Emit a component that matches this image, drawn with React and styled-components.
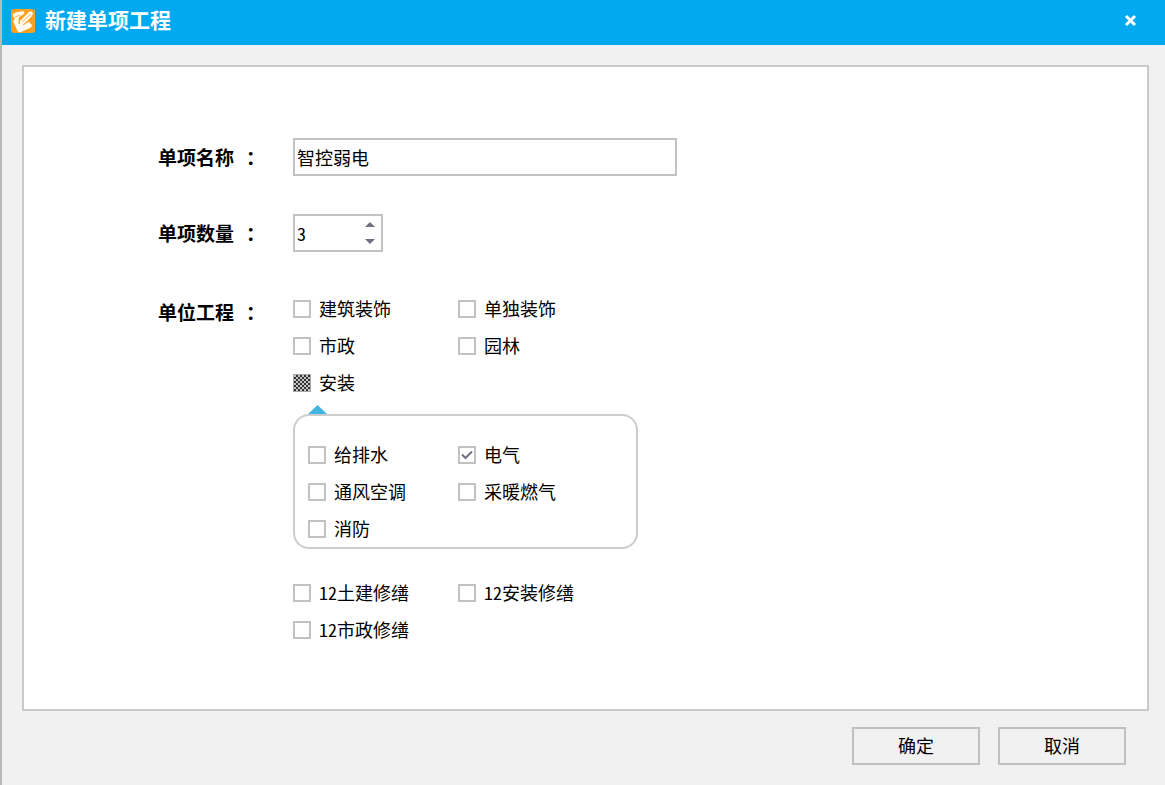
import React, { useEffect, useRef, useState } from 'react';
import styled, { createGlobalStyle } from 'styled-components';

const GlobalStyle = createGlobalStyle`
  * {
    box-sizing: border-box;
  }

  body {
    margin: 0;
    background: #f1f1f1;
  }

  body, input, button {
    font-family: "Noto Sans CJK SC", sans-serif;
    font-size: 18px;
    color: #000;
    font-feature-settings: "hwid";
  }
`;

const Window = styled.form`
  display: flex;
  flex-direction: column;
  min-height: 100vh;
  border-left: 2px solid #b9b9b9;
`;

const TitleBar = styled.header`
  display: flex;
  align-items: center;
  height: 45px;
  padding: 0 26px 4px 9px;
  background: #02a9f1;
  color: #fff;
`;

const Title = styled.h1`
  flex: 1;
  margin: 0 0 0 10px;
  padding-bottom: 4px;
  font-size: 21px;
  line-height: 28px;
  font-weight: 700;
`;

const CloseButton = styled.button`
  display: flex;
  padding: 2px;
  border: 0;
  background: none;
  color: #fff;
`;

const Panel = styled.main`
  flex: 1;
  display: flex;
  flex-direction: column;
  gap: 38px;
  margin: 20px 16px 0 20px;
  padding: 71px 20px 60px 134px;
  border: 2px solid #cacaca;
  background: #fff;
`;

const Row = styled.div`
  display: grid;
  grid-template-columns: 135px minmax(0, 384px);
  align-items: start;
`;

const Label = styled.label`
  font-size: 19px;
  line-height: ${({ $tall }) => ($tall ? '44px' : '38px')};
  font-weight: 700;

  &::after {
    content: '：';
    margin-left: 12px;
  }
`;

const TextInput = styled.input`
  width: 100%;
  height: 38px;
  padding: 0 2px;
  border: 2px solid #c2c2c2;
  border-radius: 0;
  background: #fff;
  outline: none;
`;

const Spinner = styled.div`
  display: flex;
  width: 90px;
  height: 38px;
  border: 2px solid #c2c2c2;
`;

const SpinnerInput = styled.input`
  flex: 1;
  min-width: 0;
  padding: 0 2px;
  border: 0;
  background: none;
  outline: none;
  appearance: textfield;

  &::-webkit-inner-spin-button {
    appearance: none;
  }
`;

const SpinnerButtons = styled.div`
  display: flex;
  flex-direction: column;
  width: 22px;
`;

const SpinnerButton = styled.button`
  flex: 1;
  display: flex;
  align-items: center;
  justify-content: center;
  padding: 0;
  border: 0;
  background: none;
`;

const Options = styled.div`
  display: grid;
  grid-template-columns: ${({ $first }) => $first || 165}px 1fr;
  grid-auto-rows: 37px;
`;

const OptionLabel = styled.label`
  display: flex;
  align-items: center;
  gap: 8px;
  grid-column: ${({ $alone }) => ($alone ? '1 / -1' : 'auto')};
  white-space: nowrap;
`;

const OptionText = styled.span`
  padding-bottom: 2px;
`;

const Checkbox = styled.input`
  appearance: none;
  flex: none;
  width: 18px;
  height: 18px;
  margin: 0;
  border: 2px solid #c2c2c2;
  background: #fff;

  &:checked {
    background: #fff url("data:image/svg+xml,%3Csvg xmlns='http://www.w3.org/2000/svg' viewBox='0 0 14 14'%3E%3Cpath d='M2 6.500l3.500 3.500L12 3.500' fill='none' stroke='%23707080' stroke-width='2'/%3E%3C/svg%3E");
  }

  &:indeterminate {
    border: 1px solid #a6a6a6;
    background: repeating-conic-gradient(#333 0 25%, #c4c4c4 0 50%) 0 0 / 4px 4px;
  }
`;

const Arrow = styled.svg`
  display: block;
  margin: 4px 0 0 15px;
`;

const SubPanel = styled.div`
  max-width: 345px;
  margin-bottom: 25px;
  padding: 20px 13px 0;
  border: 2px solid #cdcdcd;
  border-radius: 16px;
`;

const Footer = styled.footer`
  display: flex;
  justify-content: flex-end;
  gap: 18px;
  padding: 16px 39px 20px;
`;

const Button = styled.button`
  width: 128px;
  height: 38px;
  padding: 0 0 2px;
  border: 2px solid #c0c0c0;
  background: #f1f1f1;
`;

const Logo = () => (
  <svg width="24" height="24" viewBox="0 0 24 24" aria-hidden="true">
    <rect width="24" height="24" rx="3" fill="#f9a11f" />
    <path
      d="M2 7Q1 5 3 4L11 2Q14 2 13 5L8 8 8 15 12 16 18 13 21 16Q21 18 19 19L10 23Q7 24 6 21L2 12 4 10Z"
      fill="#fffaf0"
    />
    <path d="M9 12L18 3Q20 1 22 4L21 7 12 16 9 16Z" fill="#fffaf0" />
    <path d="M4 8L9 6M8 9V15M12 16L18 12M11 13L20 5" fill="none" stroke="#f9b45a" strokeWidth="1" />
  </svg>
);

const Option = ({ text, checked = false, mixed = false, alone = false }) => {
  const box = useRef(null);

  useEffect(() => {
    box.current.indeterminate = mixed;
  }, [mixed]);

  return (
    <OptionLabel $alone={alone}>
      <Checkbox ref={box} type="checkbox" defaultChecked={checked} />
      <OptionText>{text}</OptionText>
    </OptionLabel>
  );
};

const App = () => {
  const [count, setCount] = useState(3);

  return (
    <>
      <GlobalStyle />
      <Window onSubmit={(e) => e.preventDefault()}>
        <TitleBar>
          <Logo />
          <Title>新建单项工程</Title>
          <CloseButton type="button" aria-label="关闭">
            <svg width="13" height="13" viewBox="0 0 13 13">
              <path d="M2 2L11 11M11 2L2 11" stroke="currentColor" strokeWidth="3" />
            </svg>
          </CloseButton>
        </TitleBar>

        <Panel>
          <Row>
            <Label htmlFor="name">单项名称</Label>
            <TextInput id="name" type="text" defaultValue="智控弱电" />
          </Row>

          <Row>
            <Label htmlFor="count">单项数量</Label>
            <Spinner>
              <SpinnerInput
                id="count"
                type="number"
                value={count}
                onChange={(e) => setCount(Number(e.target.value))}
              />
              <SpinnerButtons>
                <SpinnerButton type="button" aria-label="增加" onClick={() => setCount(count + 1)}>
                  <svg width="10" height="5" viewBox="0 0 10 5">
                    <path d="M0 5L5 0L10 5Z" fill="#707080" />
                  </svg>
                </SpinnerButton>
                <SpinnerButton type="button" aria-label="减少" onClick={() => setCount(count - 1)}>
                  <svg width="10" height="5" viewBox="0 0 10 5">
                    <path d="M0 0L5 5L10 0Z" fill="#707080" />
                  </svg>
                </SpinnerButton>
              </SpinnerButtons>
            </Spinner>
          </Row>

          <Row role="group" aria-labelledby="units">
            <Label as="span" id="units" $tall>单位工程</Label>
            <div>
              <Options>
                <Option text="建筑装饰" />
                <Option text="单独装饰" />
                <Option text="市政" />
                <Option text="园林" />
                <Option text="安装" mixed alone />
              </Options>
              <Arrow width="19" height="9" viewBox="0 0 19 9" aria-hidden="true">
                <path d="M0 9L9.500 0L19 9Z" fill="#41b5e2" />
              </Arrow>
              <SubPanel>
                <Options $first={150}>
                  <Option text="给排水" />
                  <Option text="电气" checked />
                  <Option text="通风空调" />
                  <Option text="采暖燃气" />
                  <Option text="消防" />
                </Options>
              </SubPanel>
              <Options>
                <Option text="12土建修缮" />
                <Option text="12安装修缮" />
                <Option text="12市政修缮" />
              </Options>
            </div>
          </Row>
        </Panel>

        <Footer>
          <Button type="submit">确定</Button>
          <Button type="button">取消</Button>
        </Footer>
      </Window>
    </>
  );
};

export default App;
